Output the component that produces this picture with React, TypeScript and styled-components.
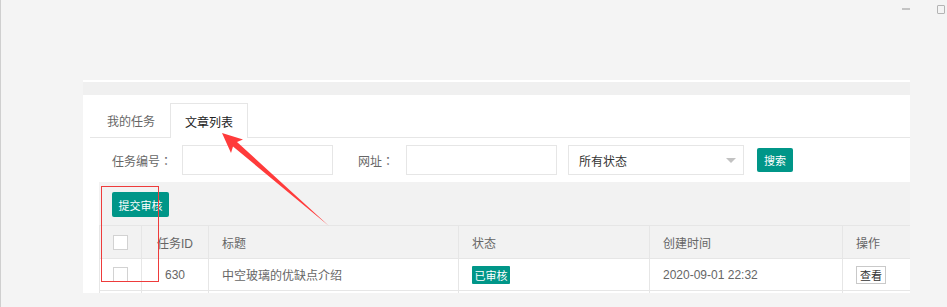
import styled, { createGlobalStyle } from "styled-components";

const GlobalStyle = createGlobalStyle`
  html, body {
    margin: 0;
    padding: 0;
    background: #f4f4f4;
    font-family: "Liberation Sans", "Noto Sans CJK SC", sans-serif;
    font-size: 12px;
    color: #666;
  }
`;

const columns = [
  { title: "", width: 42, center: true },
  { title: "任务ID", width: 67, center: true },
  { title: "标题", width: 250 },
  { title: "状态", width: 191 },
  { title: "创建时间", width: 193 },
  { title: "操作", width: 90 },
];

function Checkbox() {
  return <CheckBox />;
}

function App() {
  return (
    <Page>
      <GlobalStyle />
      <WindowBar>
        <MinIcon />
        <MaxIcon />
      </WindowBar>

      <Panel>
        <TopStrip />
        <Card>
          <TabBar>
            <Tab>我的任务</Tab>
            <Tab $active>文章列表</Tab>
          </TabBar>

          <FormRow>
            <Label $width={70}>任务编号：</Label>
            <Input $width={151} />
            <Label $width={48} $gap={25}>
              网址：
            </Label>
            <Input $width={151} />
            <Select>
              <span>所有状态</span>
              <Caret />
            </Select>
            <PrimaryButton $width={36} $height={24}>
              搜索
            </PrimaryButton>
          </FormRow>

          <TableArea>
            <Toolbar>
              <PrimaryButton $width={57} $height={25}>
                提交审核
              </PrimaryButton>
            </Toolbar>
            <Table>
              <colgroup>
                {columns.map((c, i) => (
                  <col key={i} style={{ width: c.width }} />
                ))}
              </colgroup>
              <thead>
                <tr>
                  <Th $center>
                    <Checkbox />
                  </Th>
                  {columns.slice(1).map((c) => (
                    <Th key={c.title} $center={c.center}>
                      {c.title}
                    </Th>
                  ))}
                </tr>
              </thead>
              <tbody>
                <tr>
                  <Td $center>
                    <Checkbox />
                  </Td>
                  <Td $center>630</Td>
                  <Td>中空玻璃的优缺点介绍</Td>
                  <Td>
                    <Badge>已审核</Badge>
                  </Td>
                  <Td>2020-09-01 22:32</Td>
                  <Td>
                    <SmallButton>查看</SmallButton>
                  </Td>
                </tr>
                <tr>
                  {columns.map((_, i) => (
                    <Td key={i} />
                  ))}
                </tr>
              </tbody>
            </Table>
          </TableArea>
        </Card>
      </Panel>

      <Annotation>
        <svg width="947" height="307" viewBox="0 0 947 307">
          <rect
            x="101.5"
            y="186.5"
            width="57"
            height="95"
            fill="none"
            stroke="#ee3b3b"
            strokeWidth="1"
          />
          <polygon
            points="222,133 243,139.5 237,142 329,226 233,146.5 231,153"
            fill="#ff3b3b"
          />
        </svg>
      </Annotation>
    </Page>
  );
}

export default App;

const Page = styled.div`
  position: relative;
  width: 947px;
  height: 307px;
  overflow: hidden;
  box-sizing: border-box;
  border-left: 1px solid #cfcfcf;
  background: #f4f4f4;
`;

const WindowBar = styled.div`
  display: flex;
  justify-content: flex-end;
  align-items: flex-start;
  gap: 27px;
  height: 80px;
  padding: 5px 2px 0 0;
  box-sizing: border-box;
`;

const MinIcon = styled.div`
  width: 8px;
  height: 2px;
  margin-top: 3px;
  background: #c4c4c4;
`;

const MaxIcon = styled.div`
  width: 6px;
  height: 7px;
  border: 1px solid #b4b4b4;
  border-radius: 1px;
`;

const Panel = styled.div`
  margin-left: 82px;
  width: 827px;
`;

const TopStrip = styled.div`
  height: 13px;
  border-top: 2px solid #ffffff;
  background: #f0f0f0;
`;

const Card = styled.div`
  background: #ffffff;
  height: 198px;
  overflow: hidden;
`;

const TabBar = styled.div`
  display: flex;
  margin-left: 7px;
  padding: 8px 0 0 2px;
  border-bottom: 1px solid #e6e6e6;
  height: 34px;
`;

const Tab = styled.div<{ $active?: boolean }>`
  width: 78px;
  box-sizing: border-box;
  display: flex;
  align-items: center;
  justify-content: center;
  font-size: 12px;
  color: ${(p) => (p.$active ? "#222" : "#666")};
  background: #ffffff;
  border: 1px solid ${(p) => (p.$active ? "#e6e6e6" : "transparent")};
  border-bottom: none;
  height: ${(p) => (p.$active ? "35px" : "34px")};
`;

const FormRow = styled.div`
  display: flex;
  align-items: center;
  height: 44px;
  padding-left: 29px;
`;

const Label = styled.div<{ $width: number; $gap?: number }>`
  width: ${(p) => p.$width}px;
  margin-left: ${(p) => p.$gap ?? 0}px;
  color: #666;
  font-size: 12px;
  font-family: "Liberation Sans", "Noto Sans CJK TC", sans-serif;
`;

const Input = styled.div<{ $width: number }>`
  width: ${(p) => p.$width}px;
  height: 30px;
  box-sizing: border-box;
  border: 1px solid #e6e6e6;
  background: #fff;
`;

const Select = styled.div`
  display: flex;
  align-items: center;
  justify-content: space-between;
  width: 176px;
  height: 30px;
  margin: 0 13px 0 11px;
  padding: 0 7px 0 10px;
  box-sizing: border-box;
  border: 1px solid #e6e6e6;
  color: #333;
  font-size: 12px;
`;

const Caret = styled.div`
  width: 0;
  height: 0;
  border-left: 5px solid transparent;
  border-right: 5px solid transparent;
  border-top: 5px solid #c2c2c2;
`;

const PrimaryButton = styled.div<{ $width: number; $height: number }>`
  display: flex;
  align-items: center;
  justify-content: center;
  width: ${(p) => p.$width}px;
  height: ${(p) => p.$height}px;
  background: #009688;
  color: #fff;
  font-size: 11px;
  border-radius: 2px;
`;

const TableArea = styled.div`
  margin-left: 16px;
`;

const Toolbar = styled.div`
  height: 43px;
  box-sizing: border-box;
  padding: 10px 0 0 13px;
  background: #f2f2f2;
`;

const Table = styled.table`
  border-collapse: collapse;
  table-layout: fixed;
  width: 833px;
`;

const Th = styled.th<{ $center?: boolean }>`
  height: 32px;
  padding: ${(p) => (p.$center ? "0" : "0 0 0 13px")};
  background: #f2f2f2;
  border: 1px solid #e6e6e6;
  text-align: ${(p) => (p.$center ? "center" : "left")};
  font-weight: normal;
  font-size: 12px;
  color: #666;
`;

const Td = styled.td<{ $center?: boolean }>`
  height: 31px;
  padding: ${(p) => (p.$center ? "0" : "0 0 0 13px")};
  border: 1px solid #e6e6e6;
  text-align: ${(p) => (p.$center ? "center" : "left")};
  font-size: 12px;
  color: #666;
  background: #fff;
`;

const CheckBox = styled.div`
  display: block;
  width: 15px;
  height: 15px;
  margin-left: 13px;
  box-sizing: border-box;
  border: 1px solid #d2d2d2;
  background: #fff;
`;

const Badge = styled.span`
  display: inline-flex;
  align-items: center;
  justify-content: center;
  width: 38px;
  height: 18px;
  background: #009688;
  color: #fff;
  font-size: 11px;
  border-radius: 1px;
`;

const SmallButton = styled.span`
  display: inline-flex;
  align-items: center;
  justify-content: center;
  width: 30px;
  height: 18px;
  box-sizing: border-box;
  border: 1px solid #c9c9c9;
  background: #fff;
  color: #333;
  font-size: 11px;
`;

const Annotation = styled.div`
  position: absolute;
  left: -1px;
  top: 0;
  pointer-events: none;
`;
